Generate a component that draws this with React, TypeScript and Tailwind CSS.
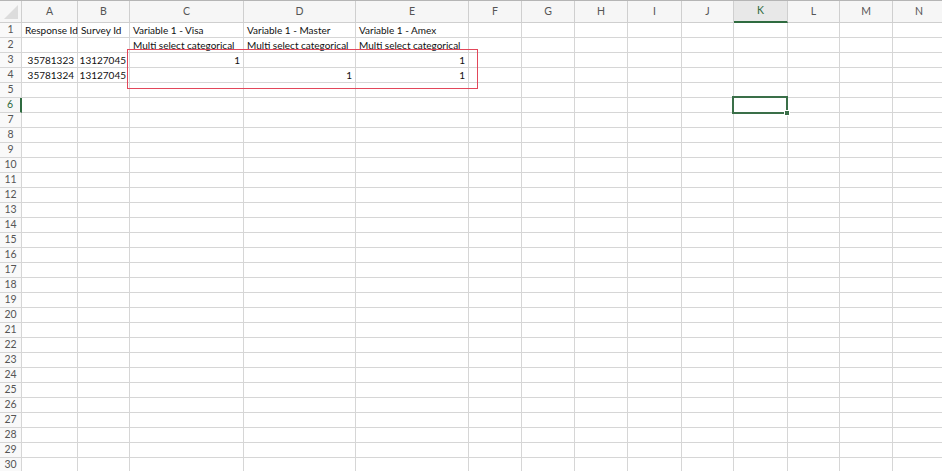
import React from "react";

const cols = [
  { key: "A", w: "w-[56px]" },
  { key: "B", w: "w-[52px]" },
  { key: "C", w: "w-[114px]" },
  { key: "D", w: "w-[112px]" },
  { key: "E", w: "w-[113px]" },
  { key: "F", w: "w-[53px]" },
  { key: "G", w: "w-[53px]" },
  { key: "H", w: "w-[53px]" },
  { key: "I", w: "w-[54px]" },
  { key: "J", w: "w-[52px]" },
  { key: "K", w: "w-[54px]" },
  { key: "L", w: "w-[52px]" },
  { key: "M", w: "w-[53px]" },
  { key: "N", w: "w-[53px]" },
];

type Cell = { text: string; right?: boolean };

const data: Record<number, Record<string, Cell>> = {
  1: {
    A: { text: "Response Id" },
    B: { text: "Survey Id" },
    C: { text: "Variable 1 - Visa" },
    D: { text: "Variable 1 - Master" },
    E: { text: "Variable 1 - Amex" },
  },
  2: {
    C: { text: "Multi select categorical" },
    D: { text: "Multi select categorical" },
    E: { text: "Multi select categorical" },
  },
  3: {
    A: { text: "35781323", right: true },
    B: { text: "13127045", right: true },
    C: { text: "1", right: true },
    E: { text: "1", right: true },
  },
  4: {
    A: { text: "35781324", right: true },
    B: { text: "13127045", right: true },
    D: { text: "1", right: true },
    E: { text: "1", right: true },
  },
};

const rows = Array.from({ length: 30 }, (_, i) => i + 1);

export default function App() {
  return (
    <div className="relative w-[942px] h-[471px] overflow-hidden bg-white font-['Lato',sans-serif] text-[#111]">
      {/* column headers */}
      <div className="flex h-[23px] border-t border-[#b5b5b5] bg-[#f6f6f6] text-[10.5px]">
        <div className="relative w-[22px] shrink-0 border-r border-b border-[#cfcfcf]">
          <div className="absolute right-[3px] bottom-[3px] w-0 h-0 border-l-[14px] border-l-transparent border-b-[14px] border-b-[#dcdcdc]" />
        </div>
        {cols.map((c) =>
          c.key === "K" ? (
            <div
              key={c.key}
              className={`${c.w} shrink-0 flex items-center justify-center border-r border-[#cfcfcf] border-b-2 border-b-[#2f6b40] bg-[#e8e8e8] text-[#2f6b40]`}
            >
              {c.key}
            </div>
          ) : (
            <div
              key={c.key}
              className={`${c.w} shrink-0 flex items-center justify-center border-r border-b border-[#cfcfcf] text-[#555]`}
            >
              {c.key}
            </div>
          )
        )}
      </div>

      {/* rows */}
      {rows.map((r) => (
        <div key={r} className="flex h-[15px] text-[10px]">
          {r === 6 ? (
            <div className="w-[22px] shrink-0 flex items-center justify-center border-r-2 border-r-[#2f6b40] border-b border-[#d6d6d6] bg-[#f6f6f6] text-[10.5px] text-[#2f6b40]">
              {r}
            </div>
          ) : (
            <div className="w-[22px] shrink-0 flex items-center justify-center border-r border-b border-[#d6d6d6] bg-[#f9f9f9] text-[10.5px] text-[#555]">
              {r}
            </div>
          )}
          {cols.map((c) => {
            const cell = data[r]?.[c.key];
            return (
              <div
                key={c.key}
                className={`${c.w} shrink-0 flex items-center px-[3px] whitespace-nowrap border-r border-b border-[#d6d6d6] ${
                  cell?.right ? "justify-end" : "justify-start"
                }`}
              >
                {cell?.text}
              </div>
            );
          })}
        </div>
      ))}

      {/* red highlight box */}
      <div className="absolute left-[127px] top-[49px] w-[351px] h-[40px] border-[1.5px] border-[#e2475a]" />

      {/* selected cell K6 */}
      <div className="absolute left-[732px] top-[96px] w-[56px] h-[18px] border-2 border-[#3a6f48]">
        <div className="absolute -right-[4px] -bottom-[4px] w-[6px] h-[6px] bg-[#3a6f48] border border-white" />
      </div>
    </div>
  );
}
